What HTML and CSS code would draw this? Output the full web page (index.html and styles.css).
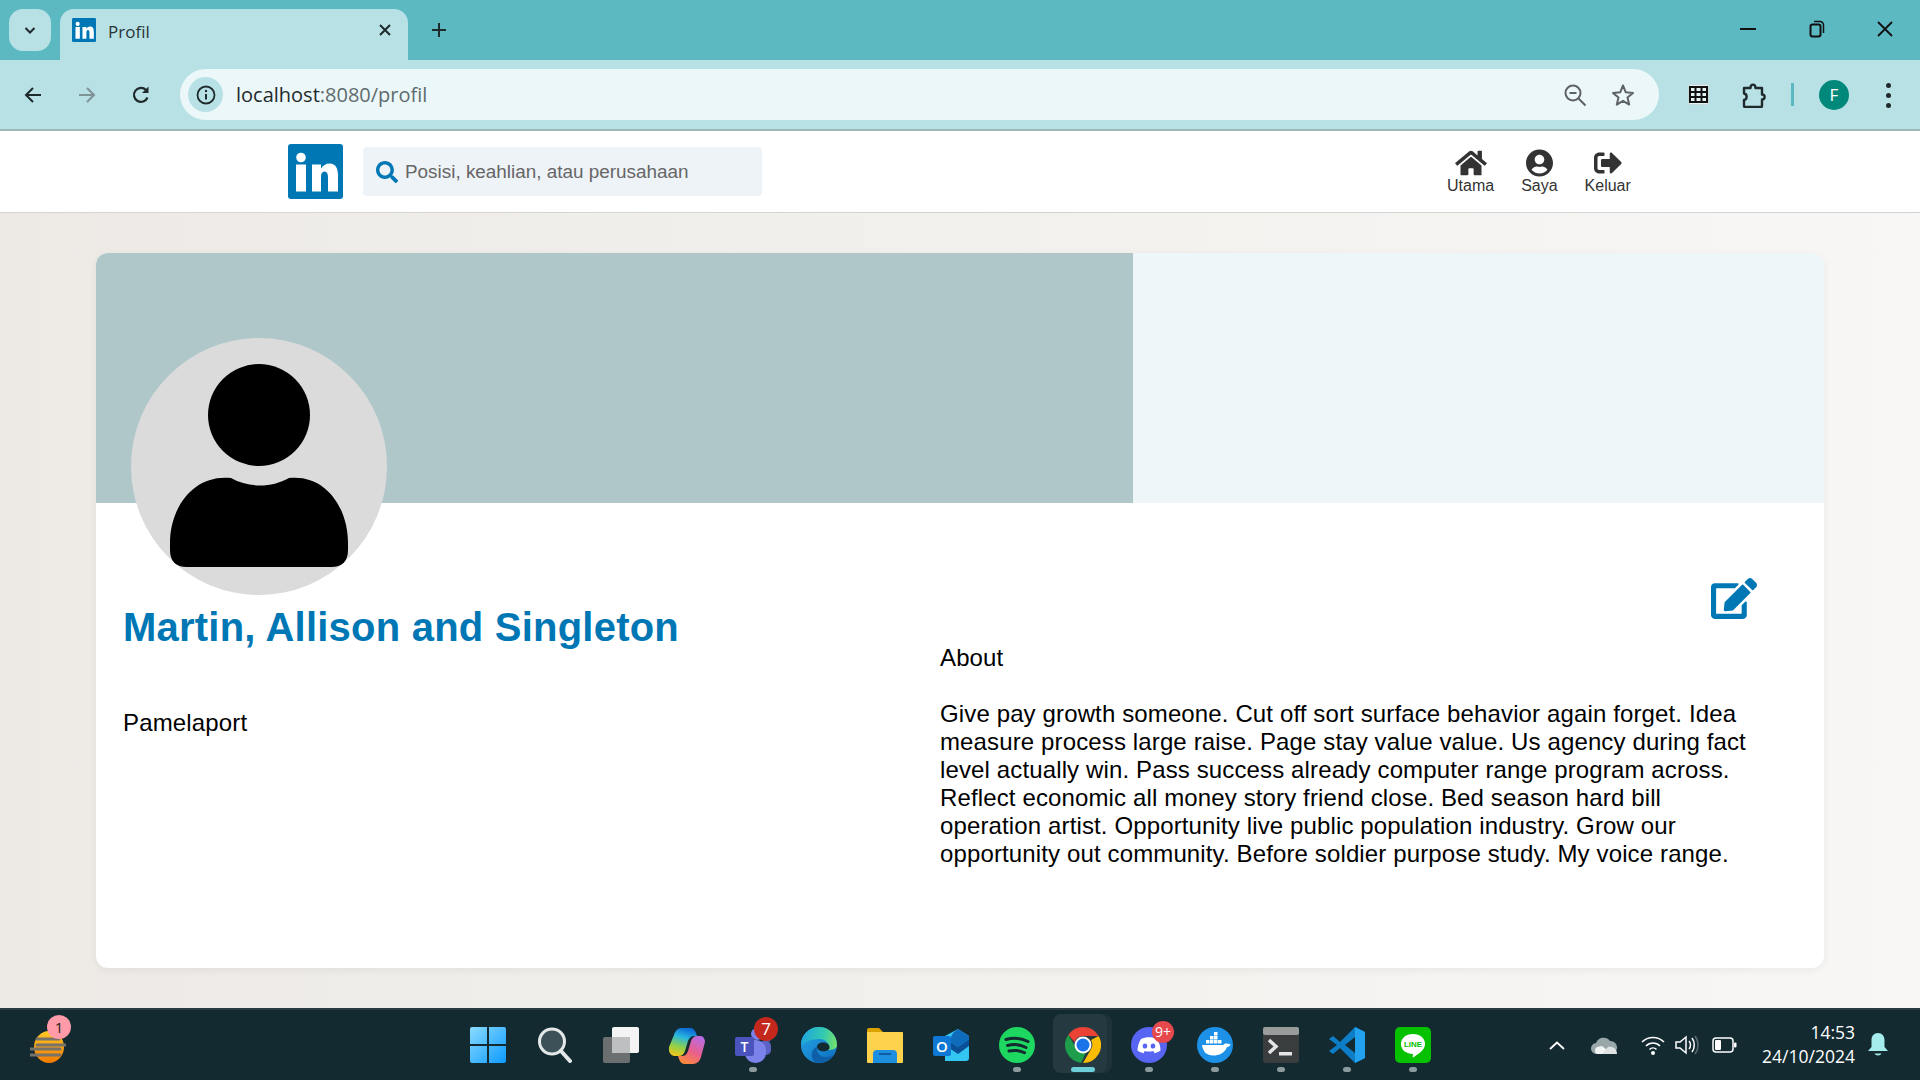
FILE: index.html
```html
<!DOCTYPE html>
<html lang="en">
<head>
    <meta charset="UTF-8">
    <title>Profil</title>
    <link rel="stylesheet" href="styles.css">
</head>
<body>
    <svg class="sprites" width="0" height="0">
        <symbol id="logo-in" viewBox="0 0 55 55">
            <rect width="55" height="55" rx="3" fill="#0077b5"/>
            <circle cx="13" cy="13.500" r="4.800" fill="#fff"/>
            <rect x="8" y="20.500" width="10" height="27" fill="#fff"/>
            <path d="M24 20.500h9v4c2-3 5-5 8.500-5 6.500 0 8.500 5 8.500 12v16H40V33.500c0-4-1-6-3.500-6S33 29.500 33 33.500v14h-9z" fill="#fff"/>
        </symbol>
    </svg>

    <!-- browser tabs -->
    <div class="tabstrip">
        <div class="tab-search">
            <svg width="16" height="16" viewBox="0 0 16 16"><path d="M3.500 6l4.500 4.500L12.500 6" fill="none" stroke="#1f2a2c" stroke-width="2"/></svg>
        </div>
        <div class="tab">
            <svg class="tab-icon" width="24" height="24"><use href="#logo-in"/></svg>
            <span class="tab-title">Profil</span>
            <svg class="tab-close" width="14" height="14" viewBox="0 0 14 14"><path d="M2 2l10 10M12 2L2 12" stroke="#1f2a2c" stroke-width="2"/></svg>
        </div>
        <svg class="new-tab" width="18" height="18" viewBox="0 0 18 18"><path d="M9 2v14M2 9h14" stroke="#1f2a2c" stroke-width="2"/></svg>
        <div class="window-controls">
            <svg width="16" height="16" viewBox="0 0 16 16"><path d="M0 8h16" stroke="#111" stroke-width="2"/></svg>
            <svg width="16" height="18" viewBox="0 0 16 18"><rect x="1.500" y="4.500" width="10" height="12" rx="2" fill="none" stroke="#111" stroke-width="2"/><path d="M5 1.500h6a3.500 3.500 0 0 1 3.500 3.500v8" fill="none" stroke="#111" stroke-width="1.500"/></svg>
            <svg width="16" height="16" viewBox="0 0 16 16"><path d="M1 1l14 14M15 1L1 15" stroke="#111" stroke-width="1.800"/></svg>
        </div>
    </div>

    <!-- browser toolbar -->
    <div class="toolbar">
        <div class="nav-btn">
            <svg width="20" height="20" viewBox="0 0 20 20"><path d="M18 10H3M10 3l-7 7 7 7" fill="none" stroke="#1f2a2c" stroke-width="2"/></svg>
        </div>
        <div class="nav-btn">
            <svg width="20" height="20" viewBox="0 0 20 20"><path d="M2 10h15M10 3l7 7-7 7" fill="none" stroke="#7f9296" stroke-width="2"/></svg>
        </div>
        <div class="nav-btn">
            <svg width="20" height="20" viewBox="0 0 20 20"><path d="M16.500 12.500A7 7 0 1 1 15 5" fill="none" stroke="#1f2a2c" stroke-width="2.200"/><path d="M17.500 1.500V8h-6.500z" fill="#1f2a2c"/></svg>
        </div>
        <div class="address">
            <div class="site-info">
                <svg width="20" height="20" viewBox="0 0 20 20"><circle cx="10" cy="10" r="8.500" fill="none" stroke="#1f2a2c" stroke-width="1.800"/><path d="M10 9v5.500" stroke="#1f2a2c" stroke-width="2"/><circle cx="10" cy="6" r="1.200" fill="#1f2a2c"/></svg>
            </div>
            <span class="url">localhost<span class="url-rest">:8080/profil</span></span>
            <div class="addr-icons">
                <svg width="24" height="24" viewBox="0 0 24 24"><circle cx="10" cy="10" r="7.500" fill="none" stroke="#5f6368" stroke-width="2"/><path d="M6.500 10h7M15.500 15.500l7 7" stroke="#5f6368" stroke-width="2"/></svg>
                <svg width="24" height="24" viewBox="0 0 24 24"><path d="M12 2.500l2.800 6.800 7.200.6-5.500 4.700 1.700 7-6.200-3.800-6.200 3.800 1.700-7L2 9.900l7.200-.6z" fill="none" stroke="#5f6368" stroke-width="2" stroke-linejoin="round"/></svg>
            </div>
        </div>
        <div class="tool-btn tool-btn-first">
            <svg width="21" height="21" viewBox="0 0 21 21"><rect x=".5" y=".5" width="20" height="20" rx="2" fill="#e6f3f4" stroke="#c8d8da"/><path d="M2 3h17v15H2zM7.500 3v15M13.500 3v15M2 8h17M2 13h17" fill="none" stroke="#111" stroke-width="2"/></svg>
        </div>
        <div class="tool-btn">
            <svg width="24" height="26" viewBox="0 0 24 26"><path d="M2 6h6.500c0-4.500 5-4.500 5 0H20v6.500c3.500 0 3.500 5 0 5V24a1 1 0 0 1-1 1H3a1 1 0 0 1-1-1v-6c3.500-.5 3.500-6 0-6.500z" fill="none" stroke="#1f2a2c" stroke-width="2.400" stroke-linejoin="round"/></svg>
        </div>
        <div class="tool-sep"></div>
        <div class="profile-dot">F</div>
        <div class="menu-dots"><i></i><i></i><i></i></div>
    </div>

    <!-- site navbar -->
    <header class="navbar">
        <svg class="navbar-logo" width="55" height="55"><use href="#logo-in"/></svg>
        <div class="search-box">
            <svg width="22" height="22" viewBox="0 0 512 512"><path fill="#0077b5" d="M505 442.700L405.300 343c-4.500-4.500-10.600-7-17-7H372c27.600-35.300 44-79.700 44-128C416 93.100 322.900 0 208 0S0 93.100 0 208s93.100 208 208 208c48.300 0 92.700-16.400 128-44v16.300c0 6.400 2.500 12.500 7 17l99.700 99.700c9.400 9.400 24.600 9.400 33.900 0l28.300-28.300c9.400-9.400 9.400-24.600.1-34zM208 336c-70.700 0-128-57.200-128-128 0-70.700 57.200-128 128-128 70.700 0 128 57.200 128 128 0 70.700-57.200 128-128 128z"/></svg>
            <span class="search-text">Posisi, keahlian, atau perusahaan</span>
        </div>
        <nav class="nav-links">
            <a class="nav-link">
                <svg width="32" height="28" viewBox="0 0 576 512"><path fill="#333" d="M280.370 148.260L96 300.110V464a16 16 0 0 0 16 16l112.060-.29a16 16 0 0 0 15.920-16V368a16 16 0 0 1 16-16h64a16 16 0 0 1 16 16v95.640a16 16 0 0 0 16 16.050L464 480a16 16 0 0 0 16-16V300L295.670 148.260a12.190 12.190 0 0 0-15.300 0zM571.600 251.470L488 182.560V44.050a12 12 0 0 0-12-12h-56a12 12 0 0 0-12 12v72.610L318.470 43a48 48 0 0 0-61 0L4.340 251.470a12 12 0 0 0-1.600 16.900l25.500 31A12 12 0 0 0 45.150 301l235.220-193.740a12.190 12.190 0 0 1 15.300 0L530.900 301a12 12 0 0 0 16.900-1.600l25.500-31a12 12 0 0 0-1.700-16.930z"/></svg>
                <span>Utama</span>
            </a>
            <a class="nav-link">
                <svg width="27" height="28" viewBox="0 0 496 512"><path fill="#333" d="M248 8C111 8 0 119 0 256s111 248 248 248 248-111 248-248S385 8 248 8zm0 96c48.600 0 88 39.400 88 88s-39.400 88-88 88-88-39.400-88-88 39.400-88 88-88zm0 344c-58.700 0-111.300-26.600-146.500-68.200 18.800-35.400 55.600-59.800 98.500-59.800 2.400 0 4.800.4 7.100 1.100 13 4.200 26.600 6.900 40.900 6.900 14.300 0 28-2.700 40.900-6.900 2.300-.7 4.700-1.100 7.100-1.100 42.900 0 79.700 24.400 98.500 59.800C359.300 421.400 306.700 448 248 448z"/></svg>
                <span>Saya</span>
            </a>
            <a class="nav-link">
                <svg width="28" height="28" viewBox="0 0 512 512"><path fill="#333" d="M497 273L329 441c-15 15-41 4.500-41-17v-96H152c-13.300 0-24-10.700-24-24v-96c0-13.300 10.700-24 24-24h136V88c0-21.400 25.900-32 41-17l168 168c9.300 9.400 9.300 24.600 0 34zM192 436v-40c0-6.600-5.400-12-12-12H96c-17.700 0-32-14.300-32-32V160c0-17.700 14.300-32 32-32h84c6.600 0 12-5.400 12-12V76c0-6.600-5.400-12-12-12H96c-53 0-96 43-96 96v192c0 53 43 96 96 96h84c6.600 0 12-5.400 12-12z"/></svg>
                <span>Keluar</span>
            </a>
        </nav>
    </header>

    <main class="page">
        <section class="profile-card">
            <div class="banner">
                <div class="banner-left"></div>
                <div class="banner-right"></div>
            </div>
            <svg class="avatar" width="256" height="257" viewBox="0 0 256 257">
                <ellipse cx="128" cy="128.500" rx="128" ry="128.500" fill="#dbdbdb"/>
                <circle cx="128" cy="77" r="51"/>
                <path d="M100 140C118 150 140 150 158 140C195 136 217 170 217 205V212Q217 229 200 229H56Q39 229 39 212V205C39 170 62 136 100 140Z"/>
            </svg>
            <div class="profile-body">
                <div class="profile-main">
                    <h1 class="company-name">Martin, Allison and Singleton</h1>
                    <p class="company-city">Pamelaport</p>
                </div>
                <div class="profile-about">
                    <div class="edit-row">
                        <svg width="46" height="41" viewBox="0 0 576 512"><path fill="#0077b5" d="M402.600 83.200l90.200 90.200c3.800 3.800 3.800 10 0 13.800L274.400 405.600l-92.800 10.300c-12.400 1.400-22.900-9.100-21.500-21.500l10.300-92.800L388.800 83.200c3.800-3.800 10-3.800 13.800 0zm162-22.900l-48.800-48.800c-15.200-15.200-39.900-15.200-55.200 0l-35.400 35.400c-3.800 3.800-3.800 10 0 13.800l90.200 90.200c3.800 3.800 10 3.800 13.800 0l35.400-35.400c15.200-15.300 15.200-40 0-55.200zM384 346.200V448H64V128h229.800c3.200 0 6.200-1.300 8.500-3.500l40-40c7.600-7.600 2.200-20.500-8.500-20.500H48C21.500 64 0 85.500 0 112v352c0 26.500 21.500 48 48 48h352c26.500 0 48-21.500 48-48V306.200c0-10.700-12.900-16-20.500-8.500l-40 40c-2.200 2.300-3.500 5.300-3.500 8.500z"/></svg>
                    </div>
                    <p class="about-label">About</p>
                    <p class="about-text">Give pay growth someone. Cut off sort surface behavior again forget. Idea measure process large raise. Page stay value value. Us agency during fact level actually win. Pass success already computer range program across. Reflect economic all money story friend close. Bed season hard bill operation artist. Opportunity live public population industry. Grow our opportunity out community. Before soldier purpose study. My voice range.</p>
                </div>
            </div>
        </section>
    </main>

    <!-- windows taskbar -->
    <footer class="taskbar">
        <div class="weather">
            <svg width="36" height="36" viewBox="0 0 36 36">
                <defs><linearGradient id="sun" x1="0" y1="0" x2="0" y2="1"><stop offset="0" stop-color="#ffc928"/><stop offset="1" stop-color="#f07a00"/></linearGradient></defs>
                <ellipse cx="19" cy="19" rx="15" ry="16" fill="url(#sun)"/>
                <path d="M7 11h22M7 17h28M0 21h30M0 27h30" stroke="#77726a" stroke-width="3" stroke-linecap="round"/>
            </svg>
            <span class="badge badge-weather">1</span>
        </div>
        <div class="task-icons">
            <div class="task-item task-start">
                <svg width="36" height="36" viewBox="0 0 36 36">
                    <defs><linearGradient id="win" x1="0" y1="0" x2="1" y2="1"><stop offset="0" stop-color="#8adcff"/><stop offset="1" stop-color="#0d9aff"/></linearGradient></defs>
                    <path fill="url(#win)" d="M2 0h15v17H0V2a2 2 0 0 1 2-2zM19 0h15a2 2 0 0 1 2 2v15H19zM0 19h17v17H2a2 2 0 0 1-2-2zM19 19h17v15a2 2 0 0 1-2 2H19z"/>
                </svg>
            </div>
            <div class="task-item">
                <svg width="36" height="36" viewBox="0 0 36 36"><circle cx="15" cy="14.500" r="12.500" fill="#3c5258" stroke="#e4e8e8" stroke-width="3"/><path d="M24 24l9 10" stroke="#e4e8e8" stroke-width="4" stroke-linecap="round"/></svg>
            </div>
            <div class="task-item">
                <svg width="36" height="36" viewBox="0 0 36 36"><rect x="0" y="10" width="27" height="26" rx="2" fill="#6b6f70"/><rect x="9" y="0" width="27" height="26" rx="2" fill="#f4f4f4"/><rect x="9" y="10" width="18" height="16" fill="#bdbfc0"/></svg>
            </div>
            <div class="task-item">
                <svg width="36" height="38" viewBox="0 0 36 38">
                    <defs>
                        <linearGradient id="cop1" x1="0.500" y1="0" x2="0.200" y2="1"><stop offset="0" stop-color="#0f6fd6"/><stop offset=".3" stop-color="#29b6e0"/><stop offset=".65" stop-color="#8fd04a"/><stop offset="1" stop-color="#f5c518"/></linearGradient>
                        <linearGradient id="cop2" x1="0.800" y1="0" x2="0.300" y2="1"><stop offset="0" stop-color="#b56ce8"/><stop offset=".55" stop-color="#e9608c"/><stop offset="1" stop-color="#fa8a3c"/></linearGradient>
                    </defs>
                    <path fill="url(#cop1)" d="M12 1h9c3 0 5 2 6 5l1 3h-3c-3 0-5 2-6 5l-3 10c-1 3-3 5-6 5H6c-4 0-7-4-6-9L5 8c1-4 4-7 7-7z"/>
                    <path fill="url(#cop2)" d="M32 9c2 0 4 3 4 6l-4 15c-1 4-4 7-8 7h-8c-3 0-5-2-6-5l-1-3h4c3 0 5-2 6-5l3-10c1-3 3-5 6-5z"/>
                </svg>
            </div>
            <div class="task-item is-running">
                <svg width="36" height="36" viewBox="0 0 36 36">
                    <circle cx="22" cy="7" r="6" fill="#7b83eb"/><circle cx="32" cy="11" r="4" fill="#5b62c4"/><rect x="24" y="14" width="12" height="14" rx="5" fill="#5b62c4"/><rect x="10" y="13" width="21" height="23" rx="10" fill="#7b83eb"/>
                    <rect x="0" y="10" width="19" height="19" rx="2" fill="#4b53bc"/>
                    <text x="9.500" y="24.500" class="icon-letter" text-anchor="middle" font-size="14">T</text>
                </svg>
                <span class="badge badge-teams">7</span>
            </div>
            <div class="task-item">
                <svg width="36" height="36" viewBox="0 0 36 36">
                    <defs>
                        <linearGradient id="edge" x1="0" y1="0" x2="1" y2="1"><stop offset="0" stop-color="#27a8e4"/><stop offset="1" stop-color="#0c6cc0"/></linearGradient>
                        <linearGradient id="edge2" x1="0" y1="0.500" x2="1" y2="0.600"><stop offset="0" stop-color="#1fa6de"/><stop offset=".6" stop-color="#33c9b0"/><stop offset="1" stop-color="#74e06a"/></linearGradient>
                    </defs>
                    <circle cx="18" cy="18" r="18" fill="url(#edge)"/>
                    <path d="M16 20C15 28 22 33 33 28 28 34 20 37 14 35 9 31 10 22 16 20z" fill="#0f5ea8"/>
                    <path d="M0 18A18 18 0 0 1 36 18C36 22 32 23 27 23 30 20 27 12 18 12 9 12 3 16 0 18Z" fill="url(#edge2)"/>
                    <path d="M27 23C24 25 17 25 16 20 16 16 22 14 27 17 29 19 29 22 27 23Z" fill="#132a31"/>
                </svg>
            </div>
            <div class="task-item">
                <svg width="36" height="36" viewBox="0 0 36 36">
                    <path d="M0 3a2 2 0 0 1 2-2h10l4 4h18a2 2 0 0 1 2 2v4H0z" fill="#dca200"/>
                    <rect x="0" y="5" width="36" height="31" rx="1" fill="#ffd24d"/>
                    <path d="M6 36v-9a4 4 0 0 1 4-4h16a4 4 0 0 1 4 4v9z" fill="#1d8fe0"/>
                    <rect x="12" y="26" width="12" height="2" fill="#0d5da0"/>
                </svg>
            </div>
            <div class="task-item">
                <svg width="36" height="36" viewBox="0 0 36 36">
                    <path d="M12 9l13-7 11 7v22a3 3 0 0 1-3 3H12z" fill="#33c6f3"/>
                    <path d="M20 6l5-4 11 7v3L25 20l-9-6z" fill="#0f6cbd"/>
                    <path d="M16 14l9 6 11-8v7l-11 8-9-6z" fill="#0a4f98"/>
                    <rect x="0" y="9" width="18" height="20" rx="2" fill="#0f78d4"/>
                    <text x="9" y="24.500" class="icon-letter" text-anchor="middle" font-size="15">O</text>
                </svg>
            </div>
            <div class="task-item is-running">
                <svg width="36" height="36" viewBox="0 0 36 36"><circle cx="18" cy="18" r="18" fill="#1ed760"/><path d="M7 12.500c7-2 15-1.500 22 2M8.500 18.500c6-1.500 13-1 18.500 2M10 24c5-1 11-.8 15.500 1.800" fill="none" stroke="#132a31" stroke-width="3" stroke-linecap="round"/></svg>
            </div>
            <div class="task-item is-active">
                <svg width="36" height="36" viewBox="0 0 36 36">
                    <path d="M18 0a18 18 0 0 1 15.600 9H18a9 9 0 0 0-8.500 6L3.300 7.800A18 18 0 0 1 18 0z" fill="#ea4335"/>
                    <path d="M33.600 9A18 18 0 0 1 18 36l7.800-13.500A9 9 0 0 0 26 13z" fill="#fbbc04"/>
                    <path d="M18 36A18 18 0 0 1 3.300 7.800l7.800 13.500a9 9 0 0 0 10 4.200L16 36z" fill="#1e9e4a"/>
                    <circle cx="18" cy="18" r="8.500" fill="#fff"/><circle cx="18" cy="18" r="6.500" fill="#1a73e8"/>
                </svg>
            </div>
            <div class="task-item is-running">
                <svg width="36" height="36" viewBox="0 0 36 36"><circle cx="18" cy="18" r="18" fill="#5865f2"/><path d="M10 12c5-2.500 11-2.500 16 0 2 3 3.500 7 3.500 11.500-2 1.500-4 2.300-6 2.800l-1.200-2.300c-3 .8-6.400.8-8.600 0l-1.200 2.300c-2-.5-4-1.300-6-2.800C6.500 19 8 15 10 12z" fill="#fff"/><ellipse cx="14" cy="19" rx="2.300" ry="2.600" fill="#5865f2"/><ellipse cx="22" cy="19" rx="2.300" ry="2.600" fill="#5865f2"/></svg>
                <span class="badge badge-discord">9+</span>
            </div>
            <div class="task-item is-running">
                <svg width="36" height="36" viewBox="0 0 36 36"><circle cx="18" cy="18" r="18" fill="#1d91e8"/><path d="M5 18h21c1-1.500 3-2 4.500-1.300 1.300-.2 2.500.3 3 1-.8 1.700-2.300 2.300-3.500 2.300C28 26 22 28.500 16 28.500c-6 0-10-3.500-11-10.500z" fill="#fff"/><path d="M9 13h3.500v3.500H9zM13 13h3.500v3.500H13zM17 13h3.500v3.500H17zM21 13h3.500v3.500H21zM17 9h3.500v3.500H17zM13 9h3.500v3.500H13zM17 5h3.500v3.500H17z" fill="#fff"/></svg>
            </div>
            <div class="task-item is-running">
                <svg width="36" height="36" viewBox="0 0 36 36"><rect width="36" height="36" rx="3" fill="#3a3d3e"/><rect width="36" height="8" rx="2" fill="#9a9c9c"/><path d="M6 13l7 6.500-7 6.500" fill="none" stroke="#e4e4e4" stroke-width="3.500"/><rect x="16" y="25" width="13" height="3.500" fill="#e4e4e4"/></svg>
            </div>
            <div class="task-item is-running">
                <svg width="36" height="36" viewBox="0 0 36 36"><path d="M26 0l10 5v26l-10 5-15-15-7 6-4-3 8-6-8-6 4-3 7 6z" fill="#0e7dc8"/><path d="M26 0l10 5v26l-10 5z" fill="#22a2ee"/><path d="M26 10v16l-10-8z" fill="#132a31"/></svg>
            </div>
            <div class="task-item is-running">
                <svg width="36" height="36" viewBox="0 0 36 36"><rect width="36" height="36" rx="5" fill="#06c100"/><path d="M18 7c7 0 12 4 12 10 0 6-7 10-11 13-1 .8-1.500.3-1.300-.8l.3-2.200C10 26.500 6 22.500 6 17 6 11 11 7 18 7z" fill="#fff"/><text x="18" y="20" class="icon-line" text-anchor="middle" font-size="8">LINE</text></svg>
            </div>
        </div>
        <div class="tray">
            <svg width="16" height="9" viewBox="0 0 16 9"><path d="M1 8l7-6.500L15 8" fill="none" stroke="#fff" stroke-width="1.800"/></svg>
            <svg class="tray-cloud" width="26" height="18" viewBox="0 0 26 18"><path d="M6 18a5.500 5.500 0 0 1-1-11A8 8 0 0 1 19 5a6 6 0 0 1 1 13z" fill="#9aa7aa"/><path d="M6 18a4 4 0 0 1 0-7l5-1 10 8z" fill="#f2f4f4"/><path d="M11 18l6-7c5-1 9 2 9 7z" fill="#dfe3e3"/></svg>
            <svg class="tray-wifi" width="24" height="22" viewBox="0 0 24 22"><path d="M1 8c6-6 16-6 22 0M5 12c4-4 10-4 14 0M8.500 15.500c2-2 5-2 7 0" fill="none" stroke="#fff" stroke-width="1.600"/><circle cx="12" cy="19" r="2" fill="#fff"/></svg>
            <svg class="tray-volume" width="24" height="22" viewBox="0 0 24 22"><path d="M1 8h4l6-5v16l-6-5H1z" fill="none" stroke="#fff" stroke-width="1.500"/><path d="M14 7c2 2 2 6 0 8M17 4c3 4 3 10 0 14" fill="none" stroke="#fff" stroke-width="1.500"/><path d="M20 2c4 5 4 13 0 18" fill="none" stroke="#5b6a6e" stroke-width="1.500"/></svg>
            <svg class="tray-battery" width="25" height="16" viewBox="0 0 25 16"><rect x="1" y="1" width="20" height="14" rx="3" fill="none" stroke="#fff" stroke-width="1.500"/><rect x="3" y="3" width="6" height="10" rx="1" fill="#fff"/><rect x="22" y="5.500" width="2.500" height="5" rx="1" fill="#fff"/></svg>
            <div class="clock">
                <span>14:53</span>
                <span>24/10/2024</span>
            </div>
            <svg class="tray-bell" width="20" height="24" viewBox="0 0 20 24"><path d="M10 0c4 0 6.500 3 6.500 7v7l3.500 4H0l3.500-4V7C3.500 3 6 0 10 0z" fill="#a5ecec"/><path d="M6.500 20.500h7c-1 2.500-6 2.500-7 0z" fill="#a5ecec"/></svg>
        </div>
    </footer>
</body>
</html>
```

FILE: styles.css
```css
* {
    box-sizing: border-box;
}

html, body {
    height: 100%;
}

body {
    margin: 0;
    height: 100vh;
    overflow: hidden;
    display: flex;
    flex-direction: column;
    font-family: "Liberation Sans", Arial, sans-serif;
    background-color: #f2f0ed;
    color: #000;
}

.sprites {
    position: absolute;
}

/* browser tabs */
.tabstrip {
    height: 60px;
    flex: none;
    display: flex;
    background-color: #5cb8c1;
    padding: 9px 0 0 9px;
}

.tab-search {
    width: 42px;
    height: 42px;
    background-color: #b8e1e6;
    border-radius: 14px;
    display: flex;
    align-items: center;
    justify-content: center;
}

.tab {
    width: 348px;
    height: 51px;
    margin-left: 9px;
    padding: 0 16px 9px 12px;
    background-color: #b8e1e6;
    border-radius: 14px 14px 0 0;
    display: flex;
    align-items: center;
}

.tab-icon {
    flex: none;
}

.tab-title {
    margin: 2px 0 0 12px;
    font-family: "Open Sans", sans-serif;
    font-size: 17px;
    color: #2a3436;
}

.tab-close {
    margin-left: auto;
}

.new-tab {
    margin: 12px 0 0 22px;
}

.window-controls {
    margin-left: auto;
    width: 180px;
    height: 42px;
    display: flex;
    align-items: center;
    justify-content: space-between;
    padding: 0 27px 0 0;
}

.window-controls svg {
    margin-top: -2px;
}

/* browser toolbar */
.toolbar {
    height: 71px;
    flex: none;
    display: flex;
    align-items: flex-start;
    background-color: #b8e1e6;
    border-bottom: 2px solid #9db8ba;
    padding: 9px 0 0 6px;
}

.nav-btn {
    width: 54px;
    height: 51px;
    display: flex;
    align-items: center;
    justify-content: center;
}

.address {
    width: 1479px;
    height: 51px;
    margin-left: 12px;
    padding: 0 12px 0 8px;
    background-color: #ebf7f8;
    border-radius: 26px;
    display: flex;
    align-items: center;
}

.site-info {
    width: 35px;
    height: 35px;
    border-radius: 50%;
    background-color: #b8e1e6;
    display: flex;
    align-items: center;
    justify-content: center;
}

.url {
    margin-left: 13px;
    font-family: "Open Sans", sans-serif;
    font-size: 20px;
    color: #1f2a2c;
}

.url-rest {
    color: #5f6b6e;
}

.addr-icons {
    margin-left: auto;
    display: flex;
    gap: 24px;
    padding-right: 12px;
}

.tool-btn {
    width: 55px;
    height: 51px;
    display: flex;
    align-items: center;
    justify-content: center;
}

.tool-btn-first {
    margin-left: 12px;
}

.tool-sep {
    width: 3px;
    height: 23px;
    margin: 14px 0 0 10px;
    background-color: #5cb8c1;
}

.profile-dot {
    width: 30px;
    height: 30px;
    margin: 11px 0 0 25px;
    border-radius: 50%;
    background-color: #00897b;
    color: #fff;
    font-family: "Open Sans", sans-serif;
    font-size: 17px;
    line-height: 30px;
    text-align: center;
}

.menu-dots {
    margin: 14px 0 0 37px;
    display: flex;
    flex-direction: column;
    gap: 5px;
}

.menu-dots i {
    display: block;
    width: 5px;
    height: 5px;
    border-radius: 50%;
    background-color: #1f2a2c;
}

/* site navbar */
.navbar {
    height: 82px;
    flex: none;
    display: flex;
    align-items: center;
    background-color: #fff;
    border-bottom: 1px solid #d4d4d4;
    padding: 0 0 0 288px;
}

.navbar-logo {
    flex: none;
    margin-top: -1px;
}

.search-box {
    width: 399px;
    height: 49px;
    margin-left: 20px;
    padding-left: 13px;
    background-color: #eef3f8;
    border-radius: 4px;
    display: flex;
    align-items: center;
    gap: 7px;
}

.search-text {
    font-size: 18.900px;
    color: #666;
}

.nav-links {
    margin-left: 685px;
    display: flex;
    gap: 27px;
}

.nav-link {
    display: flex;
    flex-direction: column;
    align-items: center;
    font-size: 16px;
    line-height: 18px;
    color: #333;
}

/* profile page */
.page {
    flex: 1;
    min-height: 0;
    display: flex;
    padding: 40px 96px;
    background: linear-gradient(to right, #edeae6, #f8f7f5);
}

.profile-card {
    position: relative;
    flex: 1;
    background-color: #fff;
    border-radius: 12px;
    box-shadow: 0 2px 8px rgba(0, 0, 0, 0.06);
    overflow: hidden;
}

.banner {
    height: 250px;
    display: flex;
}

.banner-left {
    width: 1037px;
    background-color: #b0c7c9;
}

.banner-right {
    flex: 1;
    background-color: #eff6fa;
}

.avatar {
    position: absolute;
    left: 35px;
    top: 85px;
}

.profile-body {
    display: grid;
    grid-template-columns: 1fr 1fr;
    padding: 0 67px 0 27px;
}

.profile-main {
    padding-top: 101px;
}

.company-name {
    margin: 0;
    font-size: 40px;
    line-height: 46px;
    font-weight: bold;
    letter-spacing: 0.22px;
    color: #0077b5;
}

.company-city {
    margin: 59px 0 0;
    font-size: 24px;
    line-height: 28px;
    letter-spacing: 0.15px;
}

.profile-about {
    padding-top: 75px;
}

.edit-row {
    height: 41px;
    display: flex;
    justify-content: flex-end;
}

.about-label {
    margin: 25px 0 0;
    font-size: 24px;
    line-height: 28px;
    letter-spacing: 0.13px;
}

.about-text {
    margin: 28px 0 0;
    font-size: 24px;
    line-height: 28px;
    letter-spacing: 0.13px;
}

/* windows taskbar */
.taskbar {
    height: 72px;
    flex: none;
    display: flex;
    align-items: center;
    background-color: #132a31;
    border-top: 2px solid #2a3c41;
    color: #fff;
    font-family: "Open Sans", sans-serif;
}

.weather {
    position: relative;
    width: 470px;
    padding: 2px 0 0 30px;
    display: flex;
}

.task-icons {
    display: flex;
    gap: 30px;
}

.task-item {
    position: relative;
    width: 36px;
    height: 36px;
    z-index: 0;
}

.task-start {
    margin-right: 1px;
}

.task-item.is-running::after,
.task-item.is-active::after {
    content: "";
    position: absolute;
    left: 14px;
    bottom: -9px;
    width: 8px;
    height: 5px;
    border-radius: 3px;
    background-color: #8a9a9d;
}

.task-item.is-active::before {
    content: "";
    position: absolute;
    left: -12px;
    top: -13px;
    width: 54px;
    height: 59px;
    background-color: #243a40;
    border-radius: 8px;
    box-shadow: 5px 0 0 #1e3339;
    z-index: -1;
}

.task-item.is-active::after {
    left: 6px;
    width: 24px;
    background-color: #6dd0d8;
}

.icon-letter {
    font-family: "Open Sans", sans-serif;
    font-weight: 600;
    fill: #fff;
}

.icon-line {
    font-family: "Liberation Sans", sans-serif;
    font-weight: bold;
    fill: #06c100;
}

.badge {
    position: absolute;
    border-radius: 50%;
    text-align: center;
}

.badge-weather {
    left: 47px;
    top: -11px;
    width: 24px;
    height: 24px;
    line-height: 24px;
    background-color: #ff9aa8;
    color: #222;
    font-size: 15px;
}

.badge-teams {
    left: 19px;
    top: -10px;
    width: 24px;
    height: 24px;
    line-height: 24px;
    background-color: #c4281c;
    color: #fff;
    font-size: 17px;
}

.badge-discord {
    left: 21px;
    top: -6px;
    width: 22px;
    height: 22px;
    line-height: 22px;
    background-color: #e5484d;
    color: #fff;
    font-size: 14px;
}

.tray {
    margin-left: auto;
    width: 371px;
    display: flex;
    align-items: center;
    padding-left: 0;
}

.tray svg {
    flex: none;
}

.tray-cloud {
    margin-left: 26px;
}

.tray-wifi {
    margin-left: 24px;
}

.tray-volume {
    margin-left: 10px;
}

.tray-battery {
    margin-left: 13px;
}

.clock {
    margin: -2px 0 0 auto;
    display: flex;
    flex-direction: column;
    align-items: flex-end;
    font-size: 17.500px;
    line-height: 24px;
}

.tray-bell {
    margin: 0 32px 0 13px;
}
```
